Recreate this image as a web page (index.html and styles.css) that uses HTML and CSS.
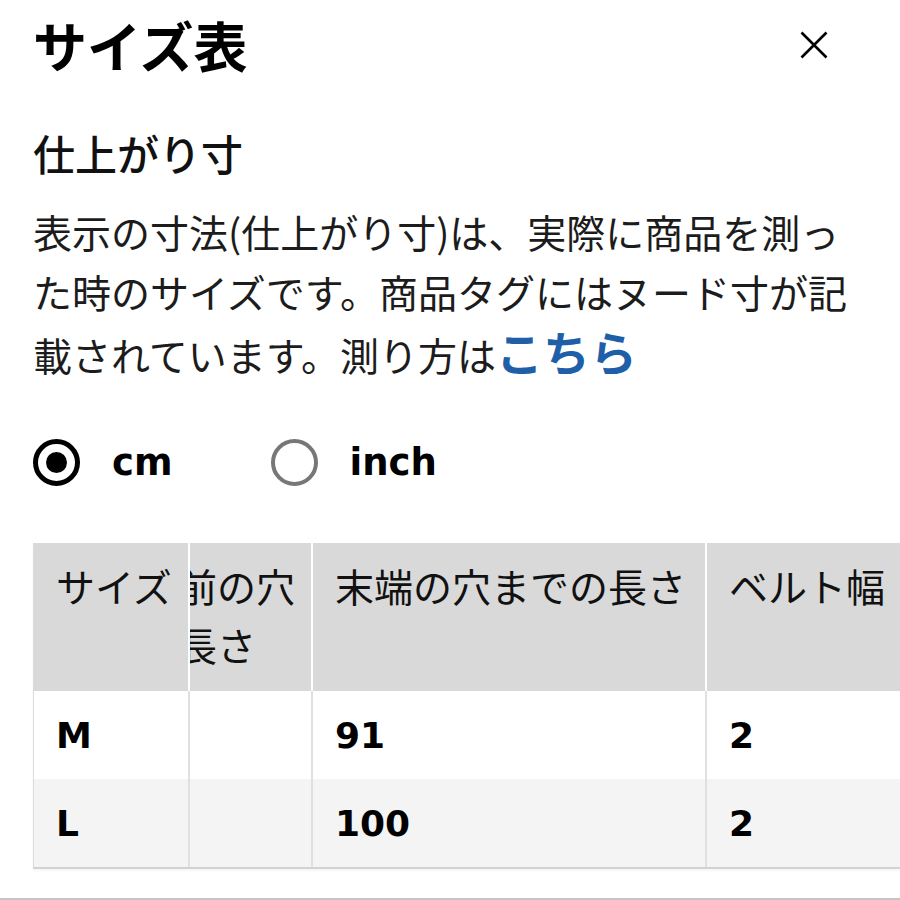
FILE: index.html
```html
<!DOCTYPE html>
<html lang="ja">
<head>
<meta charset="utf-8">
<title>サイズ表</title>
<link rel="stylesheet" href="styles.css">
</head>
<body>
<main class="sheet">
  <header class="sheet-head">
    <h1 class="sheet-title">サイズ表</h1>
    <button class="close" type="button" aria-label="閉じる">
      <svg viewBox="0 0 28 28" width="28" height="28"><path d="M1.5 1.5 L26.5 26.5 M26.5 1.5 L1.5 26.5" stroke="#000" stroke-width="2.6" fill="none"/></svg>
    </button>
  </header>
  <h2 class="section-title">仕上がり寸</h2>
  <p class="note">表示の寸法(仕上がり寸)は、実際に商品を測った時のサイズです。商品タグにはヌード寸が記載されています。測り方は<a class="note-link" href="#">こちら</a></p>
  <div class="units">
    <label class="unit"><span class="radio is-checked"></span><span class="unit-label">cm</span></label>
    <label class="unit"><span class="radio"></span><span class="unit-label">inch</span></label>
  </div>
  <div class="table-scroll">
    <table class="size-table">
      <thead>
        <tr>
          <th class="col-size">サイズ</th>
          <th class="col-front">一番手前の穴までの長さ</th>
          <th class="col-end">末端の穴までの長さ</th>
          <th class="col-width">ベルト幅</th>
        </tr>
      </thead>
      <tbody>
        <tr><td class="col-size">M</td><td></td><td>91</td><td>2</td></tr>
        <tr class="alt"><td class="col-size">L</td><td></td><td>100</td><td>2</td></tr>
      </tbody>
    </table>
  </div>
</main>
<footer class="sheet-foot"></footer>
</body>
</html>
```
FILE: styles.css
```css
* { box-sizing: border-box; }

html, body {
  margin: 0;
  padding: 0;
  background: #fff;
}

body {
  width: 900px;
  height: 900px;
  overflow: hidden;
  font-family: "Noto Sans CJK JP", "Noto Sans", sans-serif;
  color: #111;
}

.sheet {
  padding: 13px 0 0 33px;
}

/* title bar */
.sheet-head {
  display: flex;
  align-items: center;
  justify-content: space-between;
  height: 64px;
  padding-right: 72px;
}

.sheet-title {
  margin: 0;
  font-size: 54px;
  font-weight: 700;
  line-height: 64px;
  color: #000;
}

.close {
  display: block;
  width: 28px;
  height: 28px;
  padding: 0;
  border: 0;
  background: none;
}

.close svg { display: block; }

/* section */
.section-title {
  margin: 46px 0 0;
  font-size: 42px;
  font-weight: 500;
  line-height: 60px;
  color: #111;
}

.note {
  margin: 18px 0 0;
  width: 832px;
  font-size: 39px;
  line-height: 60px;
  color: #1c1c1c;
}

.note-link {
  color: #1f5fa8;
  font-size: 47px;
  font-weight: 700;
  line-height: 60px;
  text-decoration: none;
}

/* unit switch */
.units {
  display: flex;
  align-items: center;
  gap: 98px;
  height: 47px;
  margin-top: 55px;
}

.unit {
  display: flex;
  align-items: center;
  gap: 32px;
}

.radio {
  display: flex;
  align-items: center;
  justify-content: center;
  width: 47px;
  height: 47px;
  border: 4px solid #777;
  border-radius: 50%;
}

.radio.is-checked {
  border: 5px solid #000;
}

.radio.is-checked::after {
  content: "";
  width: 21px;
  height: 21px;
  border-radius: 50%;
  background: #000;
}

.unit-label {
  font-family: "DejaVu Sans", sans-serif;
  font-size: 37px;
  font-weight: 700;
  line-height: 47px;
  color: #000;
}

/* size table, scrolled sideways with a pinned first column */
.table-scroll {
  margin-top: 57px;
  overflow: hidden;
  border-bottom: 2px solid #d2d2d2;
  box-shadow: 0 2px 2px rgba(0, 0, 0, 0.04);
}

.size-table {
  table-layout: fixed;
  width: 1085px;
  margin-left: -151px;
  border-collapse: separate;
  border-spacing: 0;
}

.size-table th {
  height: 148px;
  padding: 13px 14px 0 22px;
  border-right: 2px solid #fff;
  background: #d9d9d9;
  font-size: 39px;
  font-weight: 400;
  line-height: 59px;
  text-align: left;
  vertical-align: top;
  color: #111;
}

.size-table td {
  height: 88px;
  padding: 0 14px 0 22px;
  border-right: 2px solid #e0e0e0;
  background: #fff;
  font-family: "DejaVu Sans", sans-serif;
  font-size: 36px;
  font-weight: 700;
  vertical-align: middle;
  color: #000;
}

.size-table tr.alt td {
  background: #f4f4f4;
}

.size-table .col-size {
  position: sticky;
  left: 0;
  z-index: 1;
  width: 157px;
  border-left: 1px solid #dcdcdc;
}

.size-table .col-front { width: 274px; }
.size-table .col-end { width: 394px; }
.size-table .col-width { width: 260px; }

.sheet-foot {
  margin-top: 29px;
  border-top: 2px solid #c4c4c4;
}
```
